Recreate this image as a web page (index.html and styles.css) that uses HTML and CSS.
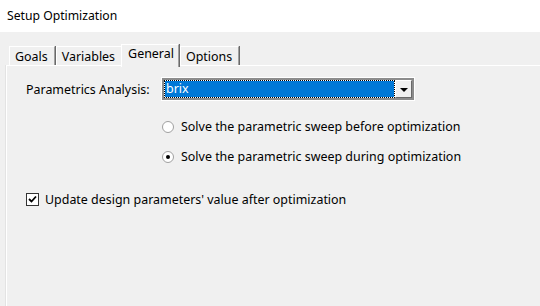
FILE: index.html
```html
<!DOCTYPE html>
<html lang="en">
<head>
    <meta charset="UTF-8">
    <title>Setup Optimization</title>
    <link rel="stylesheet" href="styles.css">
</head>
<body>
    <div class="titlebar">Setup Optimization</div>

    <div class="dialog">
        <div class="tabs">
            <div class="tab">Goals</div>
            <div class="tab">Variables</div>
            <div class="tab active">General</div>
            <div class="tab">Options</div>
        </div>

        <div class="panel">
            <div class="row">
                <span class="label">Parametrics Analysis:</span>
                <div class="combo">
                    <div class="combo-value">brix</div>
                    <div class="combo-btn"><span class="arrow"></span></div>
                </div>
            </div>

            <div class="options">
                <div class="option">
                    <span class="radio"></span>
                    Solve the parametric sweep before optimization
                </div>
                <div class="option">
                    <span class="radio checked"></span>
                    Solve the parametric sweep during optimization
                </div>
            </div>

            <div class="check-row">
                <span class="checkbox">
                    <svg width="9" height="9" viewBox="0 0 9 9"><path d="M1 4 L3.5 6.5 L8 1.5" fill="none" stroke="#000" stroke-width="1.8"/></svg>
                </span>
                Update design parameters' value after optimization
            </div>
        </div>
    </div>
</body>
</html>
```

FILE: styles.css
```css
html, body {
    margin: 0;
    height: 100%;
}
body {
    font-family: "Noto Sans", "Open Sans", sans-serif;
    font-size: 12.45px;
    color: #000;
    background-color: #f0f0f0;
    display: flex;
    flex-direction: column;
    overflow: hidden;
}
.titlebar {
    height: 32px;
    line-height: 32px;
    padding-left: 7px;
    background-color: #fff;
    font-size: 12.2px;
}
.dialog {
    flex: 1;
    display: flex;
    flex-direction: column;
    padding: 10px 0 0 6px;
}
.tabs {
    display: flex;
    align-items: flex-end;
    padding-left: 3px;
    height: 23px;
    position: relative;
    z-index: 1;
}
.tab {
    height: 18px;
    line-height: 19px;
    padding: 0 6px 0 5px;
    border-top: 1px solid #fff;
    border-left: 1px solid #fff;
    border-right: 1px solid #a0a0a0;
    box-shadow: 1px 0 0 #696969;
    margin-right: 1px;
    background-color: #f0f0f0;
}
.tab.active {
    height: 22px;
    line-height: 17px;
    margin-left: -2px;
    margin-bottom: -2px;
    padding: 0 4px 0 6px;
}
.panel {
    flex: 1;
    border-top: 1px solid #fff;
    border-left: 1px solid #fff;
    box-shadow: -1px 0 0 #e3e3e3;
    padding: 12px 0 0 19px;
}
.row {
    display: flex;
    align-items: center;
}
.label {
    width: 136px;
}
.combo {
    display: flex;
    width: 248px;
    height: 18px;
    border: 2px solid #8c8c8c;
    box-shadow: 0 0 0 1px #fff;
    background-color: #fff;
}
.combo-value {
    flex: 1;
    margin: 1px;
    background-color: #0078d7;
    outline: 1px dotted #000;
    color: #fff;
    line-height: 16px;
    padding-left: 1px;
}
.combo-btn {
    width: 15px;
    border-top: 1px solid #fff;
    border-left: 1px solid #fff;
    border-right: 1px solid #696969;
    border-bottom: 1px solid #696969;
    background-color: #f0f0f0;
    display: flex;
    align-items: center;
    justify-content: center;
}
.arrow {
    width: 0;
    height: 0;
    border-left: 4px solid transparent;
    border-right: 4px solid transparent;
    border-top: 4px solid #000;
    margin-top: 1px;
}
.options {
    padding-left: 136px;
    margin-top: 18px;
    display: flex;
    flex-direction: column;
    gap: 13px;
}
.option {
    display: flex;
    align-items: center;
    height: 17px;
}
.radio {
    width: 10px;
    height: 10px;
    border-radius: 50%;
    border: 1px solid #a0a0a0;
    background-color: #fff;
    margin-right: 7px;
    display: flex;
    align-items: center;
    justify-content: center;
}
.radio.checked::after {
    content: "";
    width: 4px;
    height: 4px;
    border-radius: 50%;
    background-color: #000;
}
.check-row {
    display: flex;
    align-items: center;
    margin-top: 26px;
    height: 17px;
}
.checkbox {
    width: 11px;
    height: 11px;
    border: 1px solid #333;
    background-color: #fff;
    margin-right: 6px;
    display: flex;
    align-items: center;
    justify-content: center;
}
```
